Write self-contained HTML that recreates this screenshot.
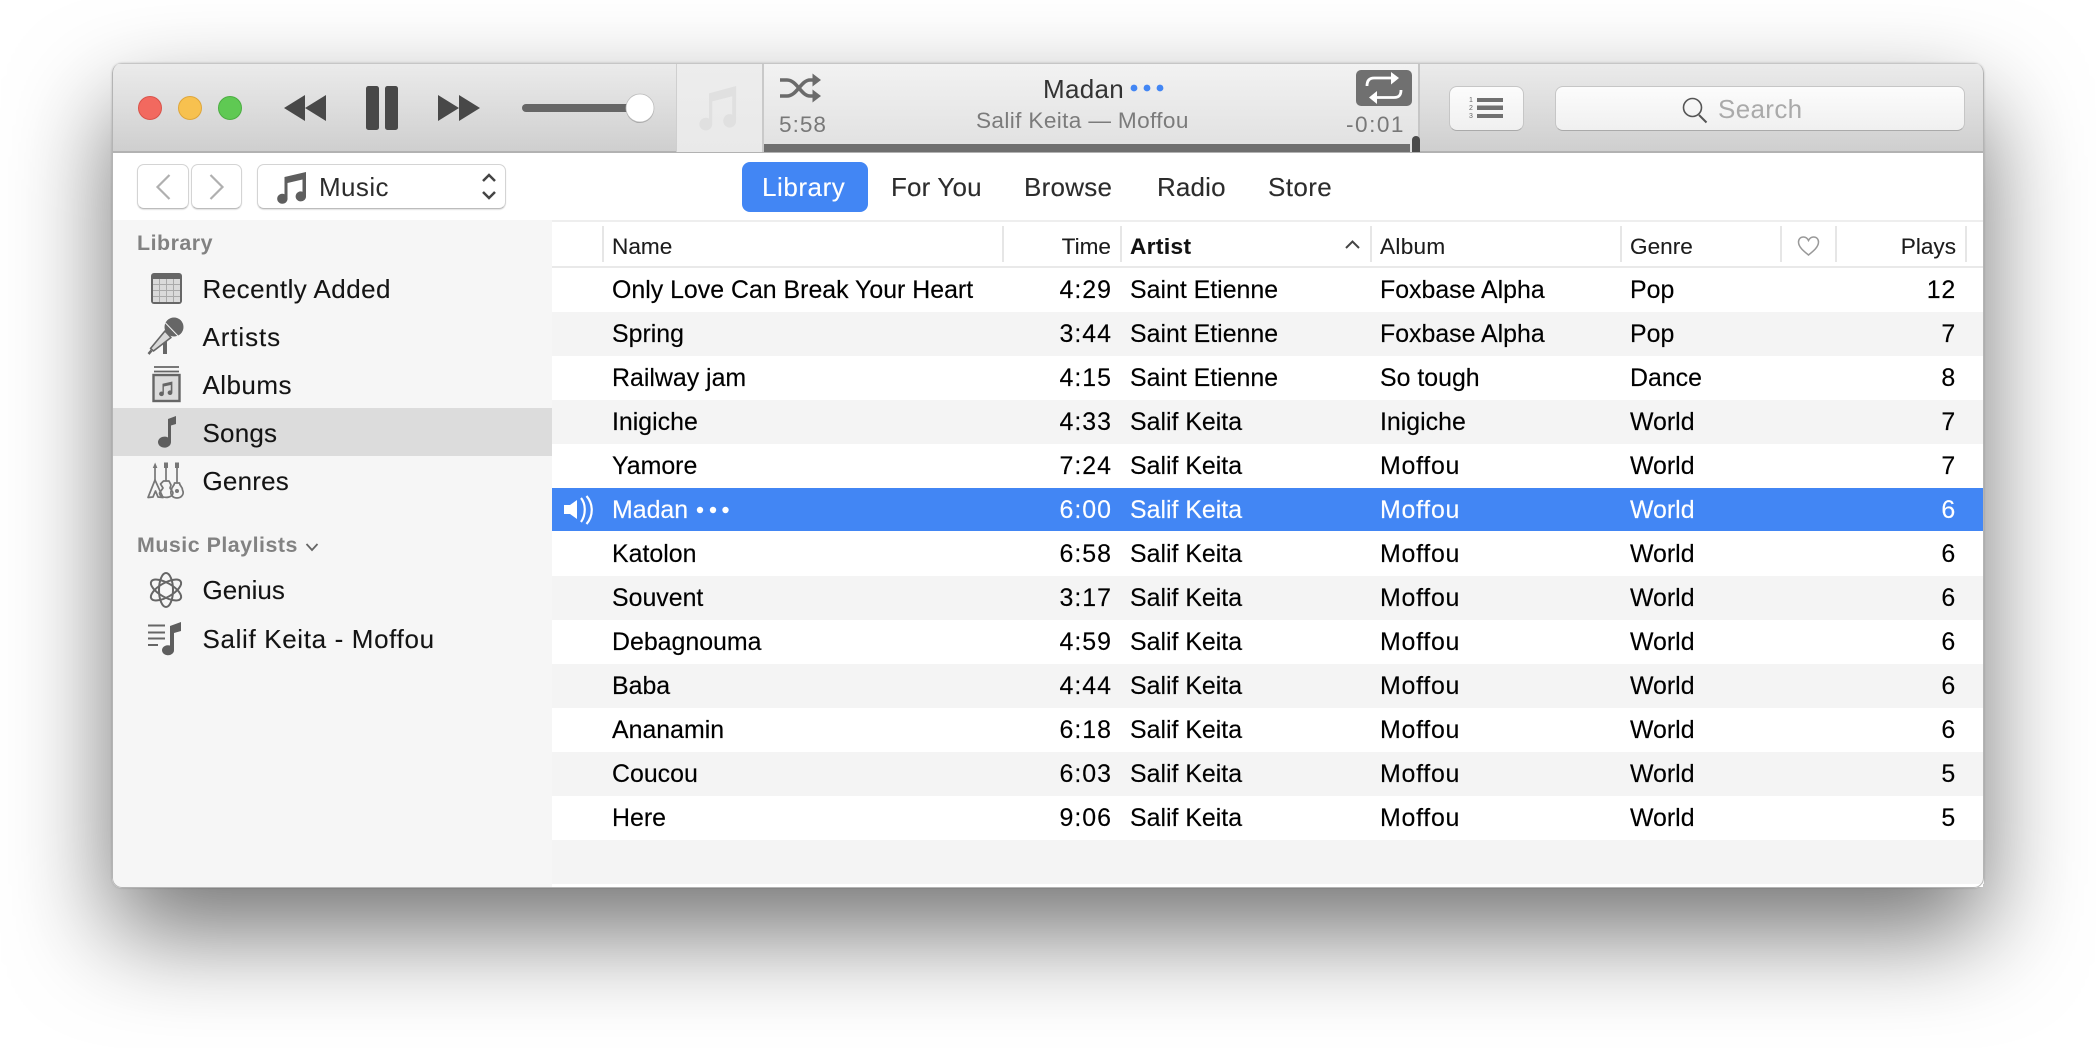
<!DOCTYPE html>
<html><head><meta charset="utf-8"><title>iTunes</title>
<style>
html,body{margin:0;padding:0;background:#fff}
body{position:relative;width:2096px;height:1048px;overflow:hidden;font-family:"Liberation Sans",sans-serif}
#sh{position:absolute;left:112px;top:63px;width:1872px;height:825px;border-radius:10px;box-shadow:0 45px 100px rgba(0,0,0,.55),0 0 2px rgba(0,0,0,.2)}
#w{position:absolute;left:112px;top:63px;width:1872px;height:825px;border-radius:10px;overflow:hidden;background:#f6f6f6}
.a{position:absolute}
#tb{left:0;top:0;width:1872px;height:90px;background:linear-gradient(#ebebeb,#cfcfcf);box-sizing:border-box;border-top:1px solid #c6c6c6;border-bottom:2px solid #b2b2b2}
#nav{left:0;top:90px;width:1872px;height:67px;background:#fff}
#side{left:0;top:157px;width:440px;height:668px;background:#f6f6f6}
#main{left:440px;top:157px;width:1432px;height:668px;background:#fff}
#edge{left:0;top:0;width:1872px;height:825px;box-sizing:border-box;border:1px solid #b4b4b4;border-top:0;border-radius:10px;pointer-events:none;z-index:5}
.r{position:absolute;left:552px;width:1432px;height:44px}
.g{background:#f4f4f4}
.sel{background:#4286f4}
.t{position:absolute;white-space:nowrap;line-height:44px;height:44px}
.c{font-size:24.9px;color:#000;top:0;-webkit-text-stroke:.15px}
.sel .c{color:#fff}
.n{left:60px}.ti{right:872px;text-align:right;letter-spacing:1px}.ar{left:578px}.al{left:828px}.ge{left:1078px}.pl{right:28px;text-align:right;letter-spacing:.8px}
.m{letter-spacing:.75px}
.h{font-size:22.6px;color:#1c1c1c;top:225px;-webkit-text-stroke:.1px}
.sb{font-size:26px;letter-spacing:.45px;color:#141414;left:202.5px;-webkit-text-stroke:.1px}
.lb{font-size:21.4px;font-weight:bold;color:#828282;left:137px;letter-spacing:.5px}
.tab{font-size:26px;color:#2c2c2c;top:165px;letter-spacing:.15px;-webkit-text-stroke:.12px}
.btn{position:absolute;box-sizing:border-box;background:#fff;border:1px solid #d4d4d4;border-bottom-color:#bcbcbc;border-radius:7px;box-shadow:0 1px 1px rgba(0,0,0,.12)}
.tbtn{position:absolute;box-sizing:border-box;background:linear-gradient(#fcfcfc,#f0f0f0);border:1px solid #c6c6c6;border-bottom-color:#aaa;border-radius:8px}
svg{position:absolute;left:0;top:0}
</style></head><body>
<div id="sh"></div>
<div id="w">
<div class="a" id="tb"></div>
<div class="a" id="nav"></div>
<div class="a" id="side"></div>
<div class="a" id="main"></div>
<div class="a" id="edge"></div>
</div>

<!-- player -->
<div class="a" style="left:676px;top:64px;width:88px;height:88px;box-sizing:border-box;background:linear-gradient(#ededed,#e9e9e9);border-left:1px solid #cfcfcf"></div>
<div class="a" style="left:762px;top:64px;width:658px;height:88px;box-sizing:border-box;background:linear-gradient(#f2f2f2,#e0e0e0);border-left:2px solid #c9c9c9;border-right:2px solid #c6c6c6"></div>
<div class="a" style="left:764px;top:144px;width:646px;height:8px;background:#6f6f6f"></div>
<div class="a" style="left:1412px;top:136px;width:8px;height:16px;background:#4a4a4a;border-radius:4px 4px 0 0"></div>

<div class="t" style="left:1043px;top:67px;font-size:26px;letter-spacing:.3px;color:#333">Madan</div>
<div class="t" style="left:976px;top:99px;font-size:22.6px;letter-spacing:.36px;color:#7b7b7b">Salif Keita — Moffou</div>
<div class="t" style="left:779px;top:103px;font-size:22.6px;letter-spacing:1px;color:#787878">5:58</div>
<div class="t" style="left:1346px;top:103px;font-size:22.6px;letter-spacing:1.5px;color:#787878">-0:01</div>

<div class="tbtn" style="left:1449px;top:86px;width:75px;height:45px"></div>
<div class="tbtn" style="left:1555px;top:86px;width:410px;height:45px"></div>
<div class="t" style="left:1718px;top:87px;font-size:26px;letter-spacing:.35px;color:#aaa">Search</div>

<!-- nav -->
<div class="btn" style="left:137px;top:164px;width:52px;height:45px"></div>
<div class="btn" style="left:191px;top:164px;width:51px;height:45px"></div>
<div class="btn" style="left:257px;top:164px;width:249px;height:45px"></div>
<div class="t" style="left:319px;top:165px;font-size:26px;letter-spacing:.4px;color:#2c2c2c">Music</div>
<div class="a" style="left:742px;top:162px;width:126px;height:50px;background:#4286f4;border-radius:8px"></div>
<div class="t tab" style="left:762px;color:#fff;letter-spacing:.55px">Library</div>
<div class="t tab" style="left:891px">For You</div>
<div class="t tab" style="left:1024px;letter-spacing:.25px">Browse</div>
<div class="t tab" style="left:1157px">Radio</div>
<div class="t tab" style="left:1268px;letter-spacing:.4px">Store</div>

<!-- sidebar -->
<div class="a" style="left:113px;top:408px;width:439px;height:48px;background:#dcdcdc"></div>
<div class="t lb" style="top:221px">Library</div>
<div class="t sb" style="top:267px">Recently Added</div>
<div class="t sb" style="top:315px;letter-spacing:.9px">Artists</div>
<div class="t sb" style="top:363px">Albums</div>
<div class="t sb" style="top:411px;letter-spacing:.2px">Songs</div>
<div class="t sb" style="top:459px;letter-spacing:.2px">Genres</div>
<div class="t lb" style="top:523px">Music Playlists</div>
<div class="t sb" style="top:568px;letter-spacing:0">Genius</div>
<div class="t sb" style="top:617px;letter-spacing:.65px">Salif Keita - Moffou</div>

<!-- header -->
<div class="a" style="left:552px;top:220px;width:1432px;height:2px;background:#eeeeee"></div>
<div class="a" style="left:552px;top:266px;width:1432px;height:2px;background:#e9e9e9"></div>
<div class="a" style="left:602px;top:226px;width:2px;height:36px;background:#e6e6e6"></div>
<div class="a" style="left:1002px;top:226px;width:2px;height:36px;background:#e6e6e6"></div>
<div class="a" style="left:1120px;top:226px;width:2px;height:36px;background:#e6e6e6"></div>
<div class="a" style="left:1370px;top:226px;width:2px;height:36px;background:#e6e6e6"></div>
<div class="a" style="left:1620px;top:226px;width:2px;height:36px;background:#e6e6e6"></div>
<div class="a" style="left:1780px;top:226px;width:2px;height:36px;background:#e6e6e6"></div>
<div class="a" style="left:1835px;top:226px;width:2px;height:36px;background:#e6e6e6"></div>
<div class="a" style="left:1965px;top:226px;width:2px;height:36px;background:#e6e6e6"></div>
<div class="t h" style="left:612px">Name</div>
<div class="t h" style="right:985px">Time</div>
<div class="t h" style="left:1130px;font-weight:bold;color:#111;letter-spacing:.4px">Artist</div>
<div class="t h" style="left:1380px;letter-spacing:.3px">Album</div>
<div class="t h" style="left:1630px">Genre</div>
<div class="t h" style="right:140px">Plays</div>

<!-- rows -->
<div class="r" style="top:268px"><span class="t c n">Only Love Can Break Your Heart</span><span class="t c ti">4:29</span><span class="t c ar">Saint Etienne</span><span class="t c al">Foxbase Alpha</span><span class="t c ge">Pop</span><span class="t c pl">12</span></div>
<div class="r g" style="top:312px"><span class="t c n">Spring</span><span class="t c ti">3:44</span><span class="t c ar">Saint Etienne</span><span class="t c al">Foxbase Alpha</span><span class="t c ge">Pop</span><span class="t c pl">7</span></div>
<div class="r" style="top:356px"><span class="t c n">Railway jam</span><span class="t c ti">4:15</span><span class="t c ar">Saint Etienne</span><span class="t c al">So tough</span><span class="t c ge">Dance</span><span class="t c pl">8</span></div>
<div class="r g" style="top:400px"><span class="t c n">Inigiche</span><span class="t c ti">4:33</span><span class="t c ar">Salif Keita</span><span class="t c al">Inigiche</span><span class="t c ge">World</span><span class="t c pl">7</span></div>
<div class="r" style="top:444px"><span class="t c n">Yamore</span><span class="t c ti">7:24</span><span class="t c ar">Salif Keita</span><span class="t c al m">Moffou</span><span class="t c ge">World</span><span class="t c pl">7</span></div>
<div class="r sel" style="top:488px;height:43px"><span class="t c n">Madan</span><span class="t c ti">6:00</span><span class="t c ar">Salif Keita</span><span class="t c al m">Moffou</span><span class="t c ge">World</span><span class="t c pl">6</span></div>
<div class="r" style="top:532px"><span class="t c n">Katolon</span><span class="t c ti">6:58</span><span class="t c ar">Salif Keita</span><span class="t c al m">Moffou</span><span class="t c ge">World</span><span class="t c pl">6</span></div>
<div class="r g" style="top:576px"><span class="t c n">Souvent</span><span class="t c ti">3:17</span><span class="t c ar">Salif Keita</span><span class="t c al m">Moffou</span><span class="t c ge">World</span><span class="t c pl">6</span></div>
<div class="r" style="top:620px"><span class="t c n">Debagnouma</span><span class="t c ti">4:59</span><span class="t c ar">Salif Keita</span><span class="t c al m">Moffou</span><span class="t c ge">World</span><span class="t c pl">6</span></div>
<div class="r g" style="top:664px"><span class="t c n">Baba</span><span class="t c ti">4:44</span><span class="t c ar">Salif Keita</span><span class="t c al m">Moffou</span><span class="t c ge">World</span><span class="t c pl">6</span></div>
<div class="r" style="top:708px"><span class="t c n">Ananamin</span><span class="t c ti">6:18</span><span class="t c ar">Salif Keita</span><span class="t c al m">Moffou</span><span class="t c ge">World</span><span class="t c pl">6</span></div>
<div class="r g" style="top:752px"><span class="t c n">Coucou</span><span class="t c ti">6:03</span><span class="t c ar">Salif Keita</span><span class="t c al m">Moffou</span><span class="t c ge">World</span><span class="t c pl">5</span></div>
<div class="r" style="top:796px"><span class="t c n">Here</span><span class="t c ti">9:06</span><span class="t c ar">Salif Keita</span><span class="t c al m">Moffou</span><span class="t c ge">World</span><span class="t c pl">5</span></div>
<div class="a g" style="left:552px;top:840px;width:1432px;height:44px"></div>
<div class="a" style="left:552px;top:884px;width:1431px;height:3px;background:#fff"></div>

<svg width="2096" height="1048" viewBox="0 0 2096 1048">
<!-- traffic lights -->
<circle cx="150" cy="108" r="11.5" fill="#f2695f" stroke="#d9534a"/>
<circle cx="190" cy="108" r="11.5" fill="#f7c14f" stroke="#dfa63a"/>
<circle cx="230" cy="108" r="11.5" fill="#5fc953" stroke="#4cae42"/>
<!-- transport -->
<g fill="#484848">
<path d="M284 108l21-13v26zM305 108l21-13v26z"/>
<rect x="366" y="86" width="13" height="44" rx="2.5"/><rect x="385" y="86" width="13" height="44" rx="2.5"/>
<path d="M438 95l21 13-21 13zM459 95l21 13-21 13z"/>
</g>
<rect x="522" y="104" width="112" height="8" rx="4" fill="#666"/>
<circle cx="640" cy="109" r="14" fill="#000" opacity=".25"/>
<circle cx="640" cy="108" r="14" fill="#fff" stroke="#bbb" stroke-width=".8"/>
<!-- art note -->
<path transform="translate(700 86) scale(1.29 1.47)" fill="#e0e0e0" d="M7 5L28 0V23.5A5 4.6 0 1 1 25 19.5V7L9.500 10.500V26A5 4.300 0 1 1 7 22.200Z"/>
<!-- shuffle -->
<g fill="none" stroke="#6b6b6b" stroke-width="3.600">
<path d="M780 80h7c10 0 14 16 23 16h4"/><path d="M780 96h7c10 0 14-16 23-16h4"/>
</g>
<path d="M812.500 73.500L821 80l-8.500 6.500zM812.500 89.500L821 96l-8.500 6.500z" fill="#6b6b6b"/>
<!-- dots -->
<g fill="#4286f4"><circle cx="1134" cy="88" r="3.400"/><circle cx="1147" cy="88" r="3.400"/><circle cx="1160" cy="88" r="3.400"/></g>
<!-- repeat -->
<rect x="1356" y="70" width="56" height="36" rx="5" fill="#707070"/>
<g fill="none" stroke="#fff" stroke-width="2.800"><path d="M1367 86c0-5 2-8 7-8h18"/><path d="M1401 90c0 5-2 7.500-7 7.500h-18"/></g>
<path d="M1391 72l8 6-8 6.500zM1377 91l-8 6.500 8 6.500z" fill="#fff"/>
<!-- list icon -->
<g fill="#707070"><rect x="1477" y="98" width="26" height="4"/><rect x="1477" y="105.500" width="26" height="4.500"/><rect x="1477" y="114" width="26" height="4"/></g>
<g font-family="Liberation Sans" font-size="7" fill="#666"><text x="1469" y="102">1</text><text x="1469" y="110">2</text><text x="1469" y="118">3</text></g>
<!-- search icon -->
<circle cx="1692.500" cy="107.500" r="9" fill="none" stroke="#555" stroke-width="1.600"/>
<path d="M1699 115l7.500 7.500" stroke="#555" stroke-width="2"/>
<!-- nav chevrons -->
<g fill="none" stroke="#b0b0b0" stroke-width="2.200"><path d="M169.500 175l-12 12 12 12"/><path d="M210.500 175l12 12-12 12"/></g>
<path transform="translate(278 172)" fill="#5e5e5e" d="M6.500 5L28 0V24A5.200 5 0 1 1 24.500 19.700V7.500L9.500 11V26A5.200 5 0 1 1 6.500 22.200Z"/>
<g fill="none" stroke="#444" stroke-width="2.500"><path d="M483 181l6-6 6 6"/><path d="M483 192l6 6 6-6"/></g>
<!-- sort caret, heart -->
<path d="M1346 248l6.500-6.500 6.500 6.500" fill="none" stroke="#444" stroke-width="2"/>
<path d="M1808.500 255c-5-4-10-8-10-13 0-3 2-5 5-5 2.500 0 4 1.500 5 3.500 1-2 2.500-3.500 5-3.500 3 0 5 2 5 5 0 5-5 9-10 13z" fill="none" stroke="#999" stroke-width="1.500"/>
<!-- recently added -->
<rect x="151" y="273" width="31" height="31" rx="3" fill="#666"/>
<rect x="153" y="279" width="27" height="23" fill="#dadada"/>
<g stroke="#aaa" stroke-width="1"><path d="M153 284.500h27M153 290.500h27M153 296.500h27M159.500 279v23M166.500 279v23M173.500 279v23"/></g>
<!-- mic -->
<path d="M165 341v13" stroke="#666" stroke-width="4"/>
<path d="M165 331l6 6.500-17.500 13.500-3-2.500z" fill="#d8d8d8" stroke="#666" stroke-width="1.600" stroke-linejoin="round"/>
<path d="M148.500 354l3-3.500" stroke="#666" stroke-width="2.500"/>
<circle cx="174" cy="327" r="9.500" fill="#666"/>
<path d="M165.500 323l13.500 14" stroke="#f6f6f6" stroke-width="1"/>
<!-- albums -->
<path d="M154 367h25M154 371.500h25" stroke="#666" stroke-width="1.800"/>
<rect x="153.500" y="375" width="26" height="26" fill="#dcdcdc" stroke="#666" stroke-width="2.400"/>
<path transform="translate(159.500 381.500) scale(.46)" fill="#666" d="M6.500 5L28 0V24A5.200 5 0 1 1 24.500 19.700V7.500L9.500 11V26A5.200 5 0 1 1 6.500 22.200Z"/>
<!-- songs -->
<path d="M168 419l8-3v8l-5 1.500V442a6.500 5.500 0 1 1-3-4.500z" fill="#5e5e5e"/>
<!-- genres -->
<g fill="none" stroke="#777" stroke-width="1.700" stroke-linejoin="round">
<path d="M155 466v14M166 466v15M177 466v17"/>
<path d="M155 480L148 497.500l5-.5 2.500-6 2.500 6 5 .5z"/>
<path d="M163.500 481l-3 3 2.500 4-3.500 5c0 4 6 5 9.500 4s5-4 3-6l-2-3 1-3-2-4z"/>
<path d="M174.500 483c0 3-3 3.500-3 7-2 4 1 8 5.500 8s7.500-4 5.500-8c0-3.500-3-4-3-7z"/>
</g>
<g fill="#777"><path d="M152.800 468l2.300-5.500 2.300 5.500zM164 468v-5.500h4v5.500zM175 468v-5.500h4v5.500z"/><circle cx="177" cy="491" r="2"/></g>
<!-- atom -->
<g fill="none" stroke="#666" stroke-width="2">
<ellipse cx="166" cy="590" rx="7" ry="17"/>
<ellipse cx="166" cy="590" rx="7" ry="17" transform="rotate(60 166 590)"/>
<ellipse cx="166" cy="590" rx="7" ry="17" transform="rotate(-60 166 590)"/>
</g>
<!-- playlist -->
<path d="M148 625.500h17M148 632.500h17M148 638.500h17M148 645h10" stroke="#666" stroke-width="2"/>
<path d="M170 626l11-4v9l-7 2v17a6 5 0 1 1-4-4.500z" fill="#5e5e5e"/>
<!-- playlists chevron -->
<path d="M306.500 544l5.500 6 5.500-6" fill="none" stroke="#666" stroke-width="1.800"/>
<!-- speaker -->
<path d="M564 505h6l7-5v19l-7-5h-6z" fill="#fff"/>
<g fill="none" stroke="#fff" stroke-width="2.200"><path d="M581 498c5 6 5 17 0 24"/><path d="M586.500 496c7 8 7 20 0 28"/></g>
<!-- row dots -->
<g fill="#fff"><circle cx="700" cy="510" r="3.200"/><circle cx="713" cy="510" r="3.200"/><circle cx="725.500" cy="510" r="3.200"/></g>
</svg>
</body></html>
